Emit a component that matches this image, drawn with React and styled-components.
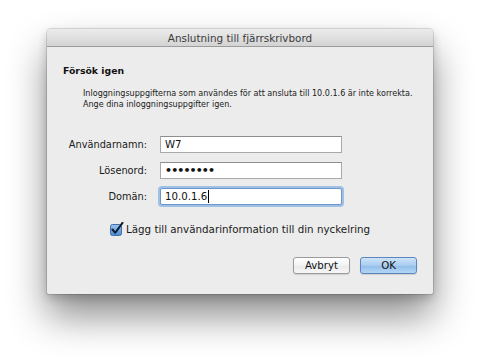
import React from "react";
import styled, { createGlobalStyle } from "styled-components";

const Global = createGlobalStyle`
  html, body { margin: 0; padding: 0; background: #ffffff; }
  body { font-family: "DejaVu Sans", "Liberation Sans", sans-serif; color: #111; }
`;

const Page = styled.div`
  width: 480px;
  height: 359px;
  padding: 29px 0 0 47px;
  box-sizing: border-box;
  overflow: hidden;
`;

const Window = styled.div`
  width: 386px;
  height: 265px;
  background: #ececec;
  border-radius: 4px 4px 2px 2px;
  box-shadow: 0 0 0 1px rgba(0,0,0,0.12), 0 22px 38px rgba(0,0,0,0.45), 0 4px 10px rgba(0,0,0,0.18);
  display: flex;
  flex-direction: column;
  overflow: hidden;
`;

const TitleBar = styled.div`
  height: 18px;
  background: linear-gradient(#ececec, #d3d3d3);
  border-bottom: 1px solid #9c9c9c;
  display: flex;
  align-items: center;
  justify-content: center;
  font-size: 10.4px;
  color: #3a3a3a;
  box-sizing: border-box;
  padding-top: 1px;
`;

const Content = styled.div`
  padding: 18px 0 0 16px;
  display: flex;
  flex-direction: column;
`;

const Heading = styled.div`
  font-weight: bold;
  font-size: 9.3px;
  height: 12px;
  line-height: 12px;
  color: #111;
`;

const Message = styled.div`
  margin: 11px 0 0 20px;
  font-size: 8.05px;
  line-height: 11px;
  color: #1a1a1a;
  white-space: nowrap;
`;

const Form = styled.div`
  margin-top: 26px;
  display: grid;
  grid-template-columns: 84px 182px;
  column-gap: 13px;
  row-gap: 9px;
  align-items: center;
`;

const Label = styled.div`
  text-align: right;
  font-size: 9.8px;
  color: #1a1a1a;
`;

const Field = styled.div`
  height: 17px;
  box-sizing: border-box;
  background: #fff;
  border: 1px solid ${p => (p.$focus ? "#6d95c7" : "#a9a9a9")};
  border-top-color: ${p => (p.$focus ? "#6d95c7" : "#8e8e8e")};
  box-shadow: ${p => (p.$focus ? "0 0 0 2px #9fc1e6" : "none")};
  border-radius: ${p => (p.$focus ? "2px" : "0")};
  display: flex;
  align-items: center;
  padding-left: 4px;
  font-size: ${p => (p.$dots ? "11px" : "10.2px")};
  font-weight: ${p => (p.$dots ? "bold" : "normal")};
  letter-spacing: ${p => (p.$dots ? "-0.9px" : "0")};
  color: #111;
`;

const Caret = styled.span`
  display: inline-block;
  width: 1px;
  height: 13px;
  background: #000;
  margin-left: 1px;
`;

const CheckRow = styled.div`
  margin: 17px 0 0 47px;
  display: flex;
  align-items: center;
  gap: 2px;
  font-size: 10.3px;
  color: #1a1a1a;
`;

const Buttons = styled.div`
  margin: 21px 16px 0 0;
  display: flex;
  justify-content: flex-end;
  gap: 10px;
`;

const Button = styled.div`
  width: 57px;
  height: 17px;
  box-sizing: border-box;
  border-radius: 3px;
  border: 1px solid ${p => (p.$primary ? "#5b86bd" : "#9a9a9a")};
  background: ${p =>
    p.$primary
      ? "linear-gradient(#cfe3f7, #a8ccf0 50%, #8fbde9 51%, #b5d6f5)"
      : "linear-gradient(#ffffff, #f2f2f2 50%, #e9e9e9 51%, #f7f7f7)"};
  display: flex;
  align-items: center;
  justify-content: center;
  font-size: 10.2px;
  color: #111;
  box-shadow: 0 1px 1px rgba(0,0,0,0.12);
`;

function CheckIcon() {
  return (
    <svg width="14" height="14" viewBox="0 0 14 14">
      <defs>
        <linearGradient id="cb" x1="0" y1="0" x2="0" y2="1">
          <stop offset="0" stopColor="#9cc4ee" />
          <stop offset="1" stopColor="#4d8ad3" />
        </linearGradient>
      </defs>
      <rect x="0.5" y="2.5" width="11" height="11" rx="2" fill="url(#cb)" stroke="#3d6ea8" />
      <path d="M2.5 7.5 L5.2 10.8 L12.5 0.8" fill="none" stroke="#0f1e33" strokeWidth="2" strokeLinecap="round" strokeLinejoin="round" />
    </svg>
  );
}

export default function App() {
  return (
    <>
      <Global />
      <Page>
        <Window>
          <TitleBar>Anslutning till fjärrskrivbord</TitleBar>
          <Content>
            <Heading>Försök igen</Heading>
            <Message>
              Inloggningsuppgifterna som användes för att ansluta till 10.0.1.6 är inte korrekta.
              <br />
              Ange dina inloggningsuppgifter igen.
            </Message>
            <Form>
              <Label>Användarnamn:</Label>
              <Field>W7</Field>
              <Label>Lösenord:</Label>
              <Field $dots>••••••••</Field>
              <Label>Domän:</Label>
              <Field $focus>
                10.0.1.6<Caret />
              </Field>
            </Form>
            <CheckRow>
              <CheckIcon />
              <span>Lägg till användarinformation till din nyckelring</span>
            </CheckRow>
            <Buttons>
              <Button>Avbryt</Button>
              <Button $primary>OK</Button>
            </Buttons>
          </Content>
        </Window>
      </Page>
    </>
  );
}
